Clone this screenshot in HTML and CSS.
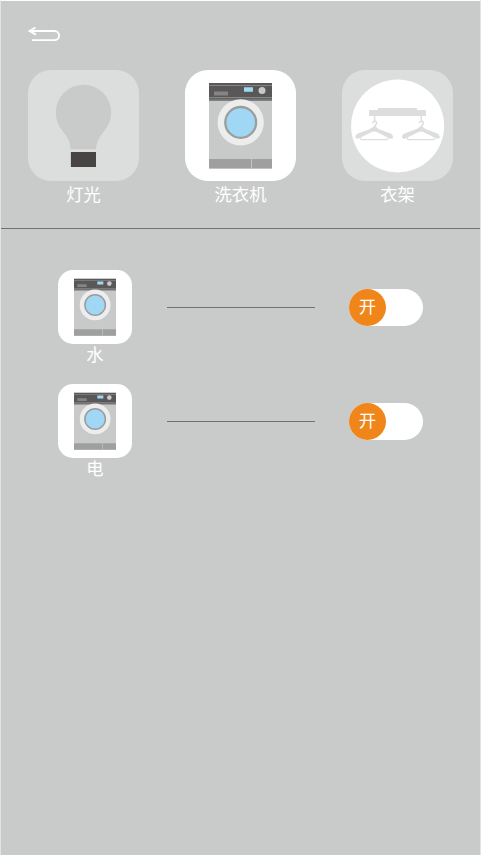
FILE: index.html
```html
<!DOCTYPE html>
<html lang="zh-CN">
<head>
<meta charset="utf-8">
<title>洗衣机</title>
<link rel="stylesheet" href="styles.css">
</head>
<body>
<svg class="defs" aria-hidden="true">
  <symbol id="washer" viewBox="0 0 111 111">
    <path fill="#c8caca" d="M24 13h63v85.5H24z"/>
    <path fill="#595758" d="M24 13h63v17.5H24z"/>
    <path fill="#858585" d="M24 15h63v1H24zM24 27h63v1H24z"/>
    <path fill="#737373" d="M24 28.5h63v2H24z"/>
    <path fill="#858585" d="M29 21.5h14v4H29z"/>
    <path fill="#9fd7f4" d="M59 17.3h9v4.5h-9z"/>
    <circle cx="77" cy="20.4" r="3.5" fill="#c8caca"/>
    <circle cx="55.7" cy="52.4" r="23.1" fill="#ededed"/>
    <circle cx="55.7" cy="52.4" r="15.4" fill="#9fd7f4" stroke="#9c9d9d" stroke-width="2.3"/>
    <path fill="#9f9f9f" d="M24 89h63v9.5H24z"/>
    <path fill="#c8caca" d="M66.1 89h.9v9.5h-.9z"/>
  </symbol>
  <symbol id="hanger" viewBox="0 0 40 28" overflow="visible">
    <path fill="none" stroke="#dcdedd" stroke-width="1.6" d="M20.300 0v6M18.500 7.500a1.900 1.900 0 1 1 3.300 1.200c-1 .8-1.500 1.100-1.500 2.500"/>
    <path fill="#dcdedd" d="M19.300 10.500q1-.5 2 0c1.500 2 3.500 3 5.500 3.900l9 3.100q3 1 3 4.600-1.500 1.500-4.500.3L23 16.500q-3-1.300-6 0L5.500 22.400q-3 1.200-4.500-.3 0-3.600 3-4.600l9-3.100c2-.9 4.800-1.900 6.300-3.900z"/>
    <path fill="none" stroke="#dcdedd" stroke-width="1.200" d="M6.500 22q-.5 2 1 2h25q1.500 0 1-2"/>
  </symbol>
</svg>
<main class="screen">
  <header class="topbar">
    <svg class="back" viewBox="0 0 34 16" role="img" aria-label="返回">
      <path d="M8.500 1.500 2.500 5l6.500 3.600M2.500 5h25a4.600 4.600 0 0 1 0 9.200H5"/>
    </svg>
  </header>
  <nav class="devices">
    <a class="device">
      <svg class="tile dim" viewBox="0 0 111 111">
        <path fill="#c9cbca" d="M55.500 14.700a27.700 27.700 0 0 1 27.700 27.700c0 10-5 16-8.500 20.500-5 6.500-6.200 11-6.700 16.400H42.700c-.5-5.400-1.700-9.900-6.500-16.400-3.500-4.500-8.400-10.500-8.400-20.500a27.700 27.700 0 0 1 27.700-27.700z"/>
        <path fill="#484444" d="M42.900 82H68v14.900H42.900z"/>
      </svg>
      <span>灯光</span>
    </a>
    <a class="device">
      <svg class="tile"><use href="#washer"/></svg>
      <span>洗衣机</span>
    </a>
    <a class="device">
      <svg class="tile dim" viewBox="0 0 111 111">
        <circle cx="55.600" cy="55.900" r="46.500" fill="#fff"/>
        <path fill="#dcdedd" d="M28 40h8v-2h39v2h8q1 0 1 1v4q0 1-1 1H28q-1 0-1-1v-4q0-1 1-1z"/>
        <use href="#hanger" x="12.300" y="45.700" width="40" height="28"/>
        <use href="#hanger" x="59" y="45.700" width="40" height="28"/>
      </svg>
      <span>衣架</span>
    </a>
  </nav>
  <section class="controls">
    <div class="control">
      <div class="device small">
        <svg class="tile"><use href="#washer"/></svg>
        <span>水</span>
      </div>
      <div class="line"></div>
      <div class="switch"><span class="knob">开</span></div>
    </div>
    <div class="control">
      <div class="device small">
        <svg class="tile"><use href="#washer"/></svg>
        <span>电</span>
      </div>
      <div class="line"></div>
      <div class="switch"><span class="knob">开</span></div>
    </div>
  </section>
</main>
</body>
</html>
```
FILE: styles.css
```css
* { box-sizing: border-box; }
body {
  margin: 0;
  color: #fff;
  font: 17.3px/24px "Noto Sans CJK SC", sans-serif;
}
.defs { display: none; }
.screen {
  height: 855px;
  background: #c9cbca;
  border: 1px solid #e2e4e3;
  border-top-color: #fafcfb;
  border-bottom-width: 0;
}
.topbar {
  height: 69px;
  padding: 25px 0 0 26px;
}
.back {
  display: block;
  width: 34px;
  height: 16px;
  fill: none;
  stroke: #fff;
  stroke-width: 1.8;
}
.devices {
  display: flex;
  justify-content: space-between;
  height: 159px;
  padding: 0 27px;
  border-bottom: 1px solid #727071;
}
.device {
  display: flex;
  flex-direction: column;
  align-items: center;
  width: 111px;
}
.device span { line-height: 25px; }
.tile {
  display: block;
  width: 111px;
  height: 111px;
  border-radius: 23px;
  background: #fff;
}
.dim { background: #dcdedd; }
.controls {
  display: grid;
  gap: 17px;
  padding: 41px 57px 0;
}
.control {
  display: flex;
  align-items: flex-start;
  height: 97px;
}
.small { width: 74px; }
.small .tile {
  width: 74px;
  height: 74px;
  border-radius: 15px;
}
.small span { line-height: 20px; }
.line {
  width: 148px;
  height: 1px;
  margin: 37px 34px 0 35px;
  background: #727071;
}
.switch {
  width: 74px;
  height: 37px;
  margin-top: 19px;
  border-radius: 19px;
  background: #fff;
}
.knob {
  display: block;
  width: 37px;
  height: 37px;
  border-radius: 50%;
  background: #f08519;
  line-height: 33px;
  text-align: center;
}
```
